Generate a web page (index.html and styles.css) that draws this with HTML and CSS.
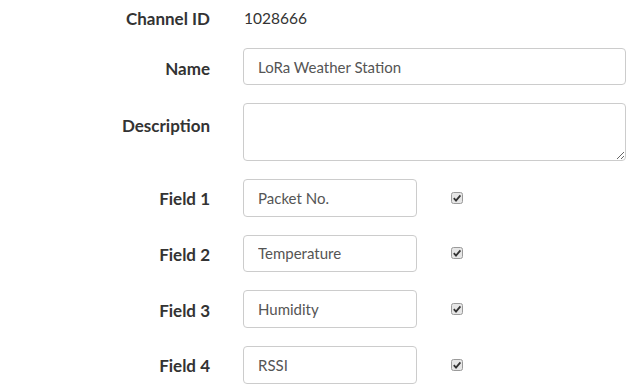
FILE: index.html
```html
<!DOCTYPE html>
<html>
<head>
<meta charset="utf-8">
<link rel="stylesheet" href="styles.css">
</head>
<body>
<form class="settings">
  <div class="row row-id">
    <label class="lbl">Channel ID</label>
    <span class="value">1028666</span>
  </div>
  <div class="row">
    <label class="lbl">Name</label>
    <input class="inp inp-wide" type="text" value="LoRa Weather Station">
  </div>
  <div class="row">
    <label class="lbl lbl-top">Description</label>
    <textarea class="inp inp-wide area"></textarea>
  </div>
  <div class="row">
    <label class="lbl lbl-field">Field 1</label>
    <input class="inp inp-field" type="text" value="Packet No.">
    <span class="chk"><svg viewBox="0 0 12 12" width="12" height="12"><rect x="0.5" y="0.5" width="11" height="11" rx="2" fill="#e6e6e6" stroke="#9a9a9a"/><path d="M2.8 6.2 L5 8.6 L9.4 3.4" fill="none" stroke="#333" stroke-width="1.8"/></svg></span>
  </div>
  <div class="row">
    <label class="lbl lbl-field">Field 2</label>
    <input class="inp inp-field" type="text" value="Temperature">
    <span class="chk"><svg viewBox="0 0 12 12" width="12" height="12"><rect x="0.5" y="0.5" width="11" height="11" rx="2" fill="#e6e6e6" stroke="#9a9a9a"/><path d="M2.8 6.2 L5 8.6 L9.4 3.4" fill="none" stroke="#333" stroke-width="1.8"/></svg></span>
  </div>
  <div class="row">
    <label class="lbl lbl-field">Field 3</label>
    <input class="inp inp-field" type="text" value="Humidity">
    <span class="chk"><svg viewBox="0 0 12 12" width="12" height="12"><rect x="0.5" y="0.5" width="11" height="11" rx="2" fill="#e6e6e6" stroke="#9a9a9a"/><path d="M2.8 6.2 L5 8.6 L9.4 3.4" fill="none" stroke="#333" stroke-width="1.8"/></svg></span>
  </div>
  <div class="row">
    <label class="lbl lbl-field">Field 4</label>
    <input class="inp inp-field" type="text" value="RSSI">
    <span class="chk"><svg viewBox="0 0 12 12" width="12" height="12"><rect x="0.5" y="0.5" width="11" height="11" rx="2" fill="#e6e6e6" stroke="#9a9a9a"/><path d="M2.8 6.2 L5 8.6 L9.4 3.4" fill="none" stroke="#333" stroke-width="1.8"/></svg></span>
  </div>
</form>
</body>
</html>
```

FILE: styles.css
```css
html, body {
  margin: 0;
  padding: 0;
  background: #fff;
}
body {
  font-family: Lato, "Liberation Sans", sans-serif;
  color: #333;
  overflow: hidden;
}
.settings {
  display: flex;
  flex-direction: column;
  gap: 18px;
  padding-top: 3px;
}
.row {
  display: flex;
  align-items: center;
}
.row-id {
  height: 27px;
}
.lbl {
  width: 210px;
  text-align: right;
  font-weight: 700;
  font-size: 17px;
  color: #333;
  margin-right: 33px;
  flex: none;
  padding-top: 3px;
}
.lbl-top {
  align-self: flex-start;
  padding-top: 12px;
}
.lbl-field {
  padding-top: 2px;
}
.value {
  font-size: 15.5px;
  color: #333;
  padding-left: 1px;
  padding-top: 2px;
}
.inp {
  box-sizing: border-box;
  font-family: Lato, "Liberation Sans", sans-serif;
  font-size: 15px;
  color: #555;
  border: 1px solid #ccc;
  border-radius: 4px;
  background: #fff;
  padding: 0 14px;
  margin: 0;
  outline: none;
}
.inp-wide {
  width: 383px;
  height: 37px;
}
.area {
  height: 58px;
  resize: both;
  padding: 6px 14px;
}
.inp-field {
  width: 174px;
  height: 37.67px;
}
.chk {
  display: inline-flex;
  margin-left: 34px;
}
```
